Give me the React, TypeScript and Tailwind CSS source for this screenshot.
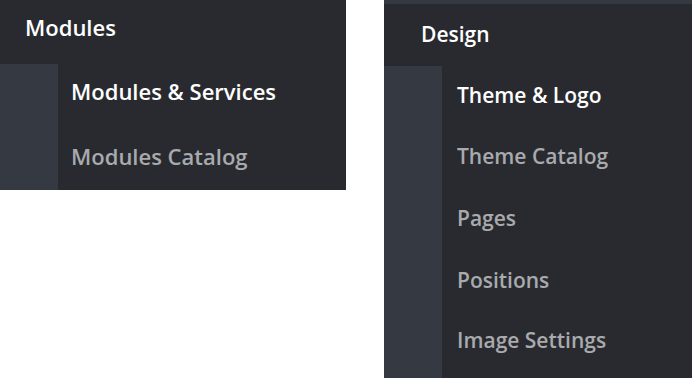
import React from "react";

const font = { fontFamily: '"Open Sans", "Noto Sans", sans-serif' };

function Row({ label, active, h, size, pl, pt }: { label: string; active?: boolean; h: string; size: string; pl: string; pt: string }) {
  return (
    <div className={`flex ${h}`}>
      <div className="w-[58px] shrink-0 bg-[#353941]" />
      <div className={`flex-1 ${pl} ${pt} ${size} leading-[28px] font-semibold ${active ? "text-white" : "text-[#a8aaae]"}`}>{label}</div>
    </div>
  );
}

export default function App() {
  return (
    <div className="flex items-start w-[692px] h-[378px] bg-white" style={font}>
      <div className="w-[346px] bg-[#282a2f] flex flex-col">
        <div className="h-[64px] pl-[25px] pt-[13px] text-[22px] leading-[28px] font-semibold text-white">Modules</div>
        <Row label="Modules & Services" active h="h-[63px]" size="text-[22px]" pl="pl-[13px]" pt="pt-[13px]" />
        <Row label="Modules Catalog" h="h-[63px]" size="text-[22px]" pl="pl-[13px]" pt="pt-[15px]" />
      </div>
      <div className="ml-[38px] w-[308px] h-[378px] bg-[#282a2f] flex flex-col">
        <div className="h-[4px] bg-[#353941]" />
        <div className="h-[62px] pl-[37px] pt-[16px] text-[21px] leading-[28px] font-semibold text-white">Design</div>
        <Row label="Theme & Logo" active h="h-[62px]" size="text-[21px]" pl="pl-[15px]" pt="pt-[15px]" />
        <Row label="Theme Catalog" h="h-[62px]" size="text-[21px]" pl="pl-[15px]" pt="pt-[14px]" />
        <Row label="Pages" h="h-[62px]" size="text-[21px]" pl="pl-[15px]" pt="pt-[14px]" />
        <Row label="Positions" h="h-[62px]" size="text-[21px]" pl="pl-[15px]" pt="pt-[14px]" />
        <Row label="Image Settings" h="h-[64px]" size="text-[21px]" pl="pl-[15px]" pt="pt-[12px]" />
      </div>
    </div>
  );
}
